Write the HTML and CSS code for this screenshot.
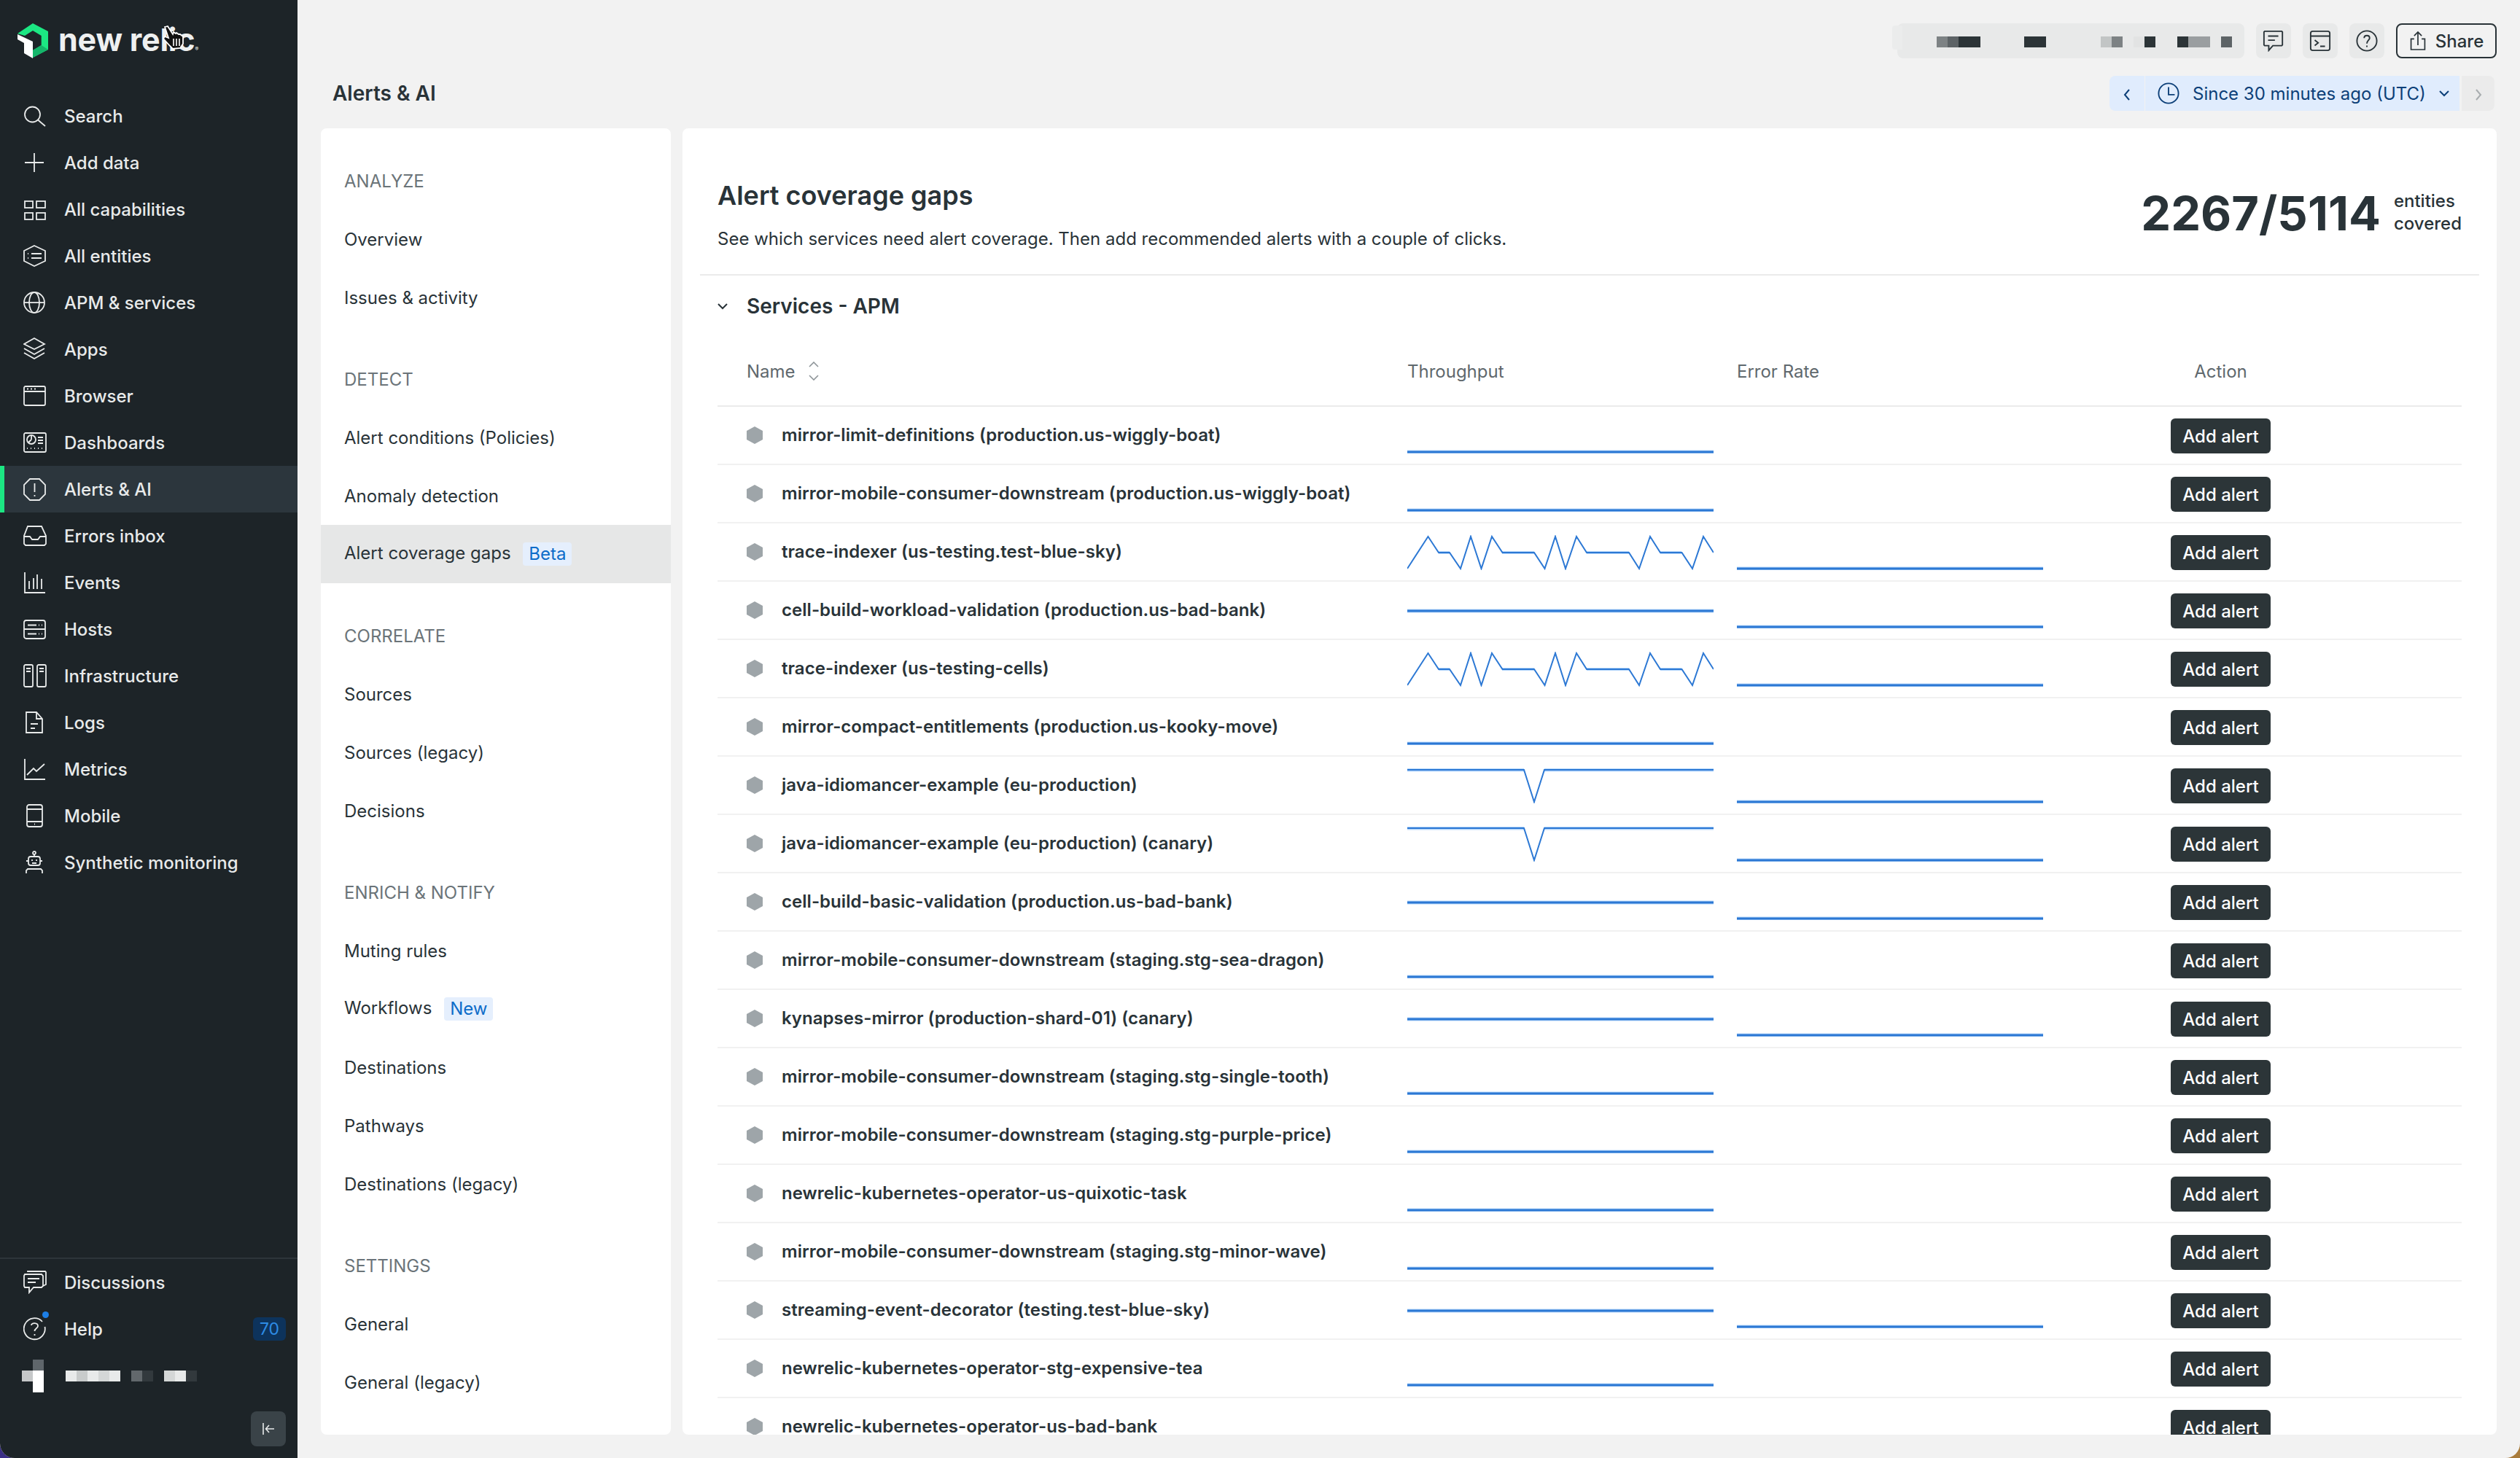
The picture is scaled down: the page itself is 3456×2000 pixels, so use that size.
FILE: index.html
```html
<!DOCTYPE html>
<html lang="en">
<head>
  <meta charset="UTF-8" />
  <title>Alert coverage gaps - New Relic</title>
  <link rel="stylesheet" href="styles.css">
</head>
<body>
  <!-- sparkline shapes, reused by every row -->
  <svg class="defs">
    <symbol id="sp-low" viewBox="0 0 420 48"><path class="halo" d="M0 46H420"/><path class="line" d="M0 46H420"/></symbol>
    <symbol id="sp-mid" viewBox="0 0 420 48"><path class="halo" d="M0 24H420"/><path class="line" d="M0 24H420"/></symbol>
    <symbol id="sp-zig" viewBox="0 0 420 48"><path class="halo thin" d="M43 24H58M130 24H174M246 24H304M347 24H376"/><path class="line thin" d="M0 46L28.5 2L43 24H58L73 46L87 2L101.500 46L116 2L130.500 24H174L188.500 46L203 2L217 46L232 2L246 24H304L318 46L333 2L347 24H376.500L391 46L406 2L420 24"/></symbol>
    <symbol id="sp-dip" viewBox="0 0 420 48"><path class="halo" d="M0 2H160M188 2H420"/><path class="line thin" d="M0 2H160L174 46L188 2H420"/></symbol>
  </svg>

  <div class="app">
    <aside class="sidebar">
      <div class="logo">
        <svg class="logo-mark" viewBox="0 0 42 48"><path fill="#1ce783" d="M21 0L42 11V36L21 47V37L32.700 30V17L21 10L10 17L0 14Z"/><path fill="#15b56a" d="M32.700 30L42 36L21 47V37Z"/><path fill="#fff" d="M0 15L21 25V48L9 41V27L0 22Z"/></svg>
        <span class="logo-text">new relic<sup>®</sup></span>
        <svg class="cursor" viewBox="0 0 30 33"><path fill="#111" stroke="#fff" stroke-width="1.800" d="M3 2L7 1L14 12L15 9L18 11L19 10L22 12L24 12L28 15L28 25L24 31L14 32L10 28L1 18L3 15L8 17Z"/><path stroke="#fff" stroke-width="1.600" d="M15 18V28M19 18V28M23 18V28"/></svg>
      </div>

      <nav class="side-nav">
        <a class="side-item"><svg viewBox="0 0 32 32"><circle cx="12.500" cy="14" r="10.500"/><path d="M20 21.500L30 30"/></svg>Search</a>
        <a class="side-item"><svg viewBox="0 0 32 32"><path d="M15 3V29M2 16H28"/></svg>Add data</a>
        <a class="side-item"><svg viewBox="0 0 32 32"><rect x="2" y="5" width="11" height="9"/><rect x="18" y="5" width="12" height="9"/><rect x="2" y="21" width="11" height="9"/><rect x="18" y="21" width="12" height="9"/></svg>All capabilities</a>
        <a class="side-item"><svg viewBox="0 0 32 32"><path d="M15 2L30 9V23L15 30L1 23V9Z"/><path d="M11 13H25M11 19H25M6 13H7M6 19H7"/></svg>All entities</a>
        <a class="side-item"><svg viewBox="0 0 32 32"><circle cx="15" cy="16" r="14"/><ellipse cx="15" cy="16" rx="7" ry="14"/><path d="M1 16H29"/></svg>APM &amp; services</a>
        <a class="side-item"><svg viewBox="0 0 32 32"><path d="M15 1L29 9L15 16L1 9Z"/><path d="M1 15L15 23L29 15"/><path d="M1 21L15 29L29 21"/></svg>Apps</a>
        <a class="side-item"><svg viewBox="0 0 32 32"><rect x="1" y="3" width="29" height="26" rx="2"/><path d="M1 10H30M5 6.500H7M10 6.500H12M15 6.500H17"/></svg>Browser</a>
        <a class="side-item"><svg viewBox="0 0 32 32"><rect x="1" y="3" width="30" height="26" rx="2"/><circle cx="11" cy="12" r="6"/><path d="M11 12V6M11 12L7 16M20 9H27M20 13H27M20 17H27M5 24H6M10 24H11M15 24H16M20 24H21M25 24H26"/></svg>Dashboards</a>
        <a class="side-item active"><svg viewBox="0 0 32 32"><path d="M9 2H22L30 10V23L22 31H9L1 23V10Z"/><path d="M15.500 8V20M15.500 24V26"/></svg>Alerts &amp; AI</a>
        <a class="side-item"><svg viewBox="0 0 32 32"><path d="M6 3H25L31 16V27L29 29H3L1 27V16Z"/><path d="M1 17H9L12 21H20L23 17H31"/></svg>Errors inbox</a>
        <a class="side-item"><svg viewBox="0 0 32 32"><path d="M2 2V30H30M8 14V25M14 10V25M19 5V25M25 11V25"/></svg>Events</a>
        <a class="side-item"><svg viewBox="0 0 32 32"><rect x="1" y="4" width="29" height="25" rx="3"/><path d="M1 16H30M6 10.500H18M21 10.500H22M25 10.500H26M6 22.500H18M21 22.500H22M25 22.500H26"/></svg>Hosts</a>
        <a class="side-item"><svg viewBox="0 0 32 32"><rect x="1" y="1" width="12" height="30" rx="2"/><rect x="19" y="1" width="12" height="30" rx="2"/><path d="M4 6H10M4 10H10M22 6H28M22 10H28"/></svg>Infrastructure</a>
        <a class="side-item"><svg viewBox="0 0 32 32"><path d="M4 2H18L26 11V30H4Z"/><path d="M18 2V11H26M10 18H20M10 24H16"/></svg>Logs</a>
        <a class="side-item"><svg viewBox="0 0 32 32"><path d="M2 2V30H30M5 24L14 15L18 19L29 9"/></svg>Metrics</a>
        <a class="side-item"><svg viewBox="0 0 32 32"><rect x="5" y="1" width="21" height="30" rx="3"/><path d="M5 7H26M5 24H26M15 27.500H16"/></svg>Mobile</a>
        <a class="side-item"><svg viewBox="0 0 32 32"><circle cx="15" cy="3" r="2"/><path d="M15 5V8"/><rect x="7" y="8" width="16" height="12" rx="3"/><path d="M4 14H7M23 14H26M12 12V14M18 12V14M12 17H18M4 31V27L6 25H24L26 27V31"/></svg>Synthetic monitoring</a>
      </nav>

      <div class="side-bottom">
        <a class="side-item"><svg viewBox="0 0 32 32"><path d="M6 2V1H30L31 2V19L27 21"/><path d="M2 5H25L27 7V21L25 23H14L8 30V23H2L1 21V7Z"/><path d="M6 11H22M6 16H17"/></svg>Discussions</a>
        <a class="side-item"><svg class="help-icon" viewBox="0 0 32 32"><path d="M26 6A14.500 14.500 0 1 0 29.500 13"/><path d="M11 11C11 7 20 7 20 12C20 15 15.500 15 15.500 19M15.500 23V25"/></svg><span class="side-grow">Help</span><b class="count">70</b><i class="help-dot"></i></a>
        <div class="user-row">
          <div class="avatar"><i class="px"></i><i class="px a1"></i><i class="px a2"></i><i class="px a3"></i><i class="px"></i><i class="px a3"></i></div>
          <div class="px-row">
            <i class="px u1"></i><i class="px u2"></i><i class="px u1"></i><i class="px u3"></i><i class="px u1"></i><i class="px"></i>
            <i class="px u4"></i><i class="px u5"></i><i class="px"></i>
            <i class="px u3"></i><i class="px u1"></i><i class="px u5"></i>
          </div>
        </div>
        <div class="collapse-row">
          <button class="collapse"><svg viewBox="0 0 20 20"><path d="M3 2V18M18 10H7M11 5L6.500 10L11 15"/></svg></button>
        </div>
      </div>
    </aside>

    <main class="content">
      <div class="topbar">
        <div class="pill">
          <i class="px t1"></i><i class="px t2"></i><i class="px t3"></i><i class="px t3"></i>
          <i class="px"></i><i class="px"></i><i class="px"></i><i class="px"></i>
          <i class="px t3"></i><i class="px t3"></i>
          <i class="px"></i><i class="px"></i><i class="px"></i><i class="px"></i><i class="px"></i>
          <i class="px t4"></i><i class="px t1"></i><i class="px"></i>
          <i class="px t5"></i><i class="px t3"></i><i class="px"></i><i class="px"></i>
          <i class="px t3"></i><i class="px t6"></i><i class="px t6"></i><i class="px"></i>
          <i class="px t2"></i>
        </div>
        <button class="icon-btn"><svg viewBox="0 0 32 32"><path d="M3 2H28L29 3V22L28 23H15L9 30V23H3L2 22V3Z"/><path d="M8 9H23M8 15H18"/></svg></button>
        <button class="icon-btn"><svg viewBox="0 0 32 32"><rect x="2" y="2" width="28" height="28" rx="3"/><path d="M2 9H30M8 15L13 19L8 23M16 24H23"/></svg></button>
        <button class="icon-btn"><svg viewBox="0 0 32 32"><circle cx="16" cy="16" r="14.500"/><path d="M12 12C12 7 20 7 20 12C20 15 16 15.500 16 20M16 23V25"/></svg></button>
        <button class="share"><svg viewBox="0 0 28 32"><path d="M8 13H3V30H25V13H20M14 23V2M8 8L14 2L20 8"/></svg>Share</button>
      </div>

      <div class="page-head">
        <h1 class="page-title">Alerts &amp; AI</h1>
        <div class="time-picker">
          <button class="time-prev"><svg viewBox="0 0 12 20"><path d="M9 3L3 10L9 17"/></svg></button>
          <button class="time-main">
            <svg class="clock" viewBox="0 0 32 32"><circle cx="16" cy="16" r="14.500"/><path d="M16 7V18H25"/></svg>
            Since 30 minutes ago (UTC)
            <svg class="chev" viewBox="0 0 14 10"><path d="M1 2L7 8L13 2"/></svg>
          </button>
          <button class="time-next"><svg viewBox="0 0 12 20"><path d="M3 3L9 10L3 17"/></svg></button>
        </div>
      </div>

      <div class="panels">
        <nav class="sub-nav">
          <section class="sub-group">
            <h3>ANALYZE</h3>
            <a>Overview</a>
            <a>Issues &amp; activity</a>
          </section>
          <section class="sub-group">
            <h3>DETECT</h3>
            <a>Alert conditions (Policies)</a>
            <a>Anomaly detection</a>
            <a class="current has-tag">Alert coverage gaps <span class="tag">Beta</span></a>
          </section>
          <section class="sub-group">
            <h3>CORRELATE</h3>
            <a>Sources</a>
            <a>Sources (legacy)</a>
            <a>Decisions</a>
          </section>
          <section class="sub-group">
            <h3>ENRICH &amp; NOTIFY</h3>
            <a>Muting rules</a>
            <a class="has-tag">Workflows <span class="tag">New</span></a>
            <a>Destinations</a>
            <a>Pathways</a>
            <a>Destinations (legacy)</a>
          </section>
          <section class="sub-group">
            <h3>SETTINGS</h3>
            <a>General</a>
            <a>General (legacy)</a>
          </section>
        </nav>

        <section class="card">
          <header class="card-head">
            <div>
              <h2>Alert coverage gaps</h2>
              <p>See which services need alert coverage. Then add recommended alerts with a couple of clicks.</p>
            </div>
            <div class="covered">
              <strong>2267/5114</strong>
              <span>entities<br>covered</span>
            </div>
          </header>

          <div class="card-body">
            <div class="group-title">
              <svg viewBox="0 0 14 10"><path d="M1 2L7 8L13 2"/></svg>
              Services - APM
            </div>

            <div class="row row-head">
              <div class="th-name">Name <svg viewBox="0 0 14 26"><path d="M1 7L7 1L13 7M1 19L7 25L13 19"/></svg></div>
              <div>Throughput</div>
              <div>Error Rate</div>
              <div class="th-action">Action</div>
            </div>

            <div class="row">
              <div class="name"><svg viewBox="0 0 22 24"><path d="M11 0L22 6V18L11 24L0 18V6Z"/></svg><span>mirror-limit-definitions (production.us-wiggly-boat)</span></div>
              <svg class="spark"><use href="#sp-low"/></svg>
              <div></div>
              <button class="add">Add alert</button>
            </div>
            <div class="row">
              <div class="name"><svg viewBox="0 0 22 24"><path d="M11 0L22 6V18L11 24L0 18V6Z"/></svg><span>mirror-mobile-consumer-downstream (production.us-wiggly-boat)</span></div>
              <svg class="spark"><use href="#sp-low"/></svg>
              <div></div>
              <button class="add">Add alert</button>
            </div>
            <div class="row">
              <div class="name"><svg viewBox="0 0 22 24"><path d="M11 0L22 6V18L11 24L0 18V6Z"/></svg><span>trace-indexer (us-testing.test-blue-sky)</span></div>
              <svg class="spark"><use href="#sp-zig"/></svg>
              <svg class="spark"><use href="#sp-low"/></svg>
              <button class="add">Add alert</button>
            </div>
            <div class="row">
              <div class="name"><svg viewBox="0 0 22 24"><path d="M11 0L22 6V18L11 24L0 18V6Z"/></svg><span>cell-build-workload-validation (production.us-bad-bank)</span></div>
              <svg class="spark"><use href="#sp-mid"/></svg>
              <svg class="spark"><use href="#sp-low"/></svg>
              <button class="add">Add alert</button>
            </div>
            <div class="row">
              <div class="name"><svg viewBox="0 0 22 24"><path d="M11 0L22 6V18L11 24L0 18V6Z"/></svg><span>trace-indexer (us-testing-cells)</span></div>
              <svg class="spark"><use href="#sp-zig"/></svg>
              <svg class="spark"><use href="#sp-low"/></svg>
              <button class="add">Add alert</button>
            </div>
            <div class="row">
              <div class="name"><svg viewBox="0 0 22 24"><path d="M11 0L22 6V18L11 24L0 18V6Z"/></svg><span>mirror-compact-entitlements (production.us-kooky-move)</span></div>
              <svg class="spark"><use href="#sp-low"/></svg>
              <div></div>
              <button class="add">Add alert</button>
            </div>
            <div class="row">
              <div class="name"><svg viewBox="0 0 22 24"><path d="M11 0L22 6V18L11 24L0 18V6Z"/></svg><span>java-idiomancer-example (eu-production)</span></div>
              <svg class="spark"><use href="#sp-dip"/></svg>
              <svg class="spark"><use href="#sp-low"/></svg>
              <button class="add">Add alert</button>
            </div>
            <div class="row">
              <div class="name"><svg viewBox="0 0 22 24"><path d="M11 0L22 6V18L11 24L0 18V6Z"/></svg><span>java-idiomancer-example (eu-production) (canary)</span></div>
              <svg class="spark"><use href="#sp-dip"/></svg>
              <svg class="spark"><use href="#sp-low"/></svg>
              <button class="add">Add alert</button>
            </div>
            <div class="row">
              <div class="name"><svg viewBox="0 0 22 24"><path d="M11 0L22 6V18L11 24L0 18V6Z"/></svg><span>cell-build-basic-validation (production.us-bad-bank)</span></div>
              <svg class="spark"><use href="#sp-mid"/></svg>
              <svg class="spark"><use href="#sp-low"/></svg>
              <button class="add">Add alert</button>
            </div>
            <div class="row">
              <div class="name"><svg viewBox="0 0 22 24"><path d="M11 0L22 6V18L11 24L0 18V6Z"/></svg><span>mirror-mobile-consumer-downstream (staging.stg-sea-dragon)</span></div>
              <svg class="spark"><use href="#sp-low"/></svg>
              <div></div>
              <button class="add">Add alert</button>
            </div>
            <div class="row">
              <div class="name"><svg viewBox="0 0 22 24"><path d="M11 0L22 6V18L11 24L0 18V6Z"/></svg><span>kynapses-mirror (production-shard-01) (canary)</span></div>
              <svg class="spark"><use href="#sp-mid"/></svg>
              <svg class="spark"><use href="#sp-low"/></svg>
              <button class="add">Add alert</button>
            </div>
            <div class="row">
              <div class="name"><svg viewBox="0 0 22 24"><path d="M11 0L22 6V18L11 24L0 18V6Z"/></svg><span>mirror-mobile-consumer-downstream (staging.stg-single-tooth)</span></div>
              <svg class="spark"><use href="#sp-low"/></svg>
              <div></div>
              <button class="add">Add alert</button>
            </div>
            <div class="row">
              <div class="name"><svg viewBox="0 0 22 24"><path d="M11 0L22 6V18L11 24L0 18V6Z"/></svg><span>mirror-mobile-consumer-downstream (staging.stg-purple-price)</span></div>
              <svg class="spark"><use href="#sp-low"/></svg>
              <div></div>
              <button class="add">Add alert</button>
            </div>
            <div class="row">
              <div class="name"><svg viewBox="0 0 22 24"><path d="M11 0L22 6V18L11 24L0 18V6Z"/></svg><span>newrelic-kubernetes-operator-us-quixotic-task</span></div>
              <svg class="spark"><use href="#sp-low"/></svg>
              <div></div>
              <button class="add">Add alert</button>
            </div>
            <div class="row">
              <div class="name"><svg viewBox="0 0 22 24"><path d="M11 0L22 6V18L11 24L0 18V6Z"/></svg><span>mirror-mobile-consumer-downstream (staging.stg-minor-wave)</span></div>
              <svg class="spark"><use href="#sp-low"/></svg>
              <div></div>
              <button class="add">Add alert</button>
            </div>
            <div class="row">
              <div class="name"><svg viewBox="0 0 22 24"><path d="M11 0L22 6V18L11 24L0 18V6Z"/></svg><span>streaming-event-decorator (testing.test-blue-sky)</span></div>
              <svg class="spark"><use href="#sp-mid"/></svg>
              <svg class="spark"><use href="#sp-low"/></svg>
              <button class="add">Add alert</button>
            </div>
            <div class="row">
              <div class="name"><svg viewBox="0 0 22 24"><path d="M11 0L22 6V18L11 24L0 18V6Z"/></svg><span>newrelic-kubernetes-operator-stg-expensive-tea</span></div>
              <svg class="spark"><use href="#sp-low"/></svg>
              <div></div>
              <button class="add">Add alert</button>
            </div>
            <div class="row">
              <div class="name"><svg viewBox="0 0 22 24"><path d="M11 0L22 6V18L11 24L0 18V6Z"/></svg><span>newrelic-kubernetes-operator-us-bad-bank</span></div>
              <div></div>
              <div></div>
              <button class="add">Add alert</button>
            </div>
          </div>
        </section>
      </div>
    </main>
  </div>
</body>
</html>
```

FILE: styles.css
```css
* {
  box-sizing: border-box;
}

html, body {
  height: 100%;
}

body {
  margin: 0;
  font-family: 'Inter', 'Liberation Sans', sans-serif;
  font-size: 24px;
  color: #293338;
  background: linear-gradient(90deg, #3b2f86 50%, #a97c3c 50%);
}

h1, h2, h3, p {
  margin: 0;
}

button {
  font: inherit;
  border: none;
  padding: 0;
  cursor: pointer;
}

.defs {
  display: none;
}

.halo {
  fill: none;
  stroke: #b4d6fb;
  stroke-width: 5;
}

.halo.thin {
  stroke-width: 4;
}

.line {
  fill: none;
  stroke: #2c78d4;
  stroke-width: 3;
}

.line.thin {
  stroke-width: 2;
}

.app {
  display: flex;
  height: 2000px;
  background: #f2f2f2;
  border-radius: 0 0 20px 20px;
  overflow: hidden;
}

/* pixelated (blurred out) blocks */
.px {
  display: block;
  width: 15px;
  height: 15px;
}

/* left bar */
.sidebar {
  width: 408px;
  flex-shrink: 0;
  display: flex;
  flex-direction: column;
  background: #1d2428;
  color: #e8eaea;
}

.logo {
  position: relative;
  height: 127px;
  padding: 32px 0 0 24px;
  display: flex;
  align-items: flex-start;
  gap: 14px;
}

.logo-mark {
  width: 42px;
  height: 48px;
  flex-shrink: 0;
}

.logo-text {
  font-size: 43px;
  line-height: 44px;
  font-weight: 700;
  color: #eef0f0;
  letter-spacing: -0.2px;
}

.logo-text sup {
  font-size: 7px;
  font-weight: 400;
  line-height: 0;
  vertical-align: baseline;
}

.cursor {
  position: absolute;
  left: 223px;
  top: 35px;
  width: 30px;
  height: 33px;
}

.side-item {
  height: 64px;
  display: flex;
  align-items: center;
  gap: 24px;
  padding-left: 32px;
  font-weight: 500;
  white-space: nowrap;
}

.side-item svg {
  width: 32px;
  height: 32px;
  flex-shrink: 0;
  fill: none;
  stroke: #e8eaea;
  stroke-width: 1.8;
}

.side-item.active {
  background: #2c363d;
  box-shadow: inset 6px 0 0 #1ce783;
}

.side-bottom {
  margin-top: auto;
  border-top: 2px solid #2d353a;
}

.side-bottom .side-item {
  position: relative;
}

.side-grow {
  flex: 1;
}

.count {
  margin-right: 16px;
  width: 45px;
  height: 32px;
  border-radius: 6px;
  background: #0d335c;
  color: #2e8ce6;
  font-weight: 400;
  font-size: 23px;
  line-height: 32px;
  text-align: center;
}

.help-dot {
  position: absolute;
  left: 58px;
  top: 8px;
  width: 9px;
  height: 9px;
  border-radius: 50%;
  background: #1d7fe6;
}

.user-row {
  display: flex;
  align-items: center;
  gap: 30px;
  height: 64px;
  padding: 0 0 0 30px;
}

.avatar {
  display: grid;
  grid-template-columns: 15px 15px;
}

.a1 { background: #5f666b; }
.a2 { background: #c6c8c9; }
.a3 { background: #fff; }

.px-row {
  display: flex;
}

.u1 { background: #e8eaea; }
.u2 { background: #c8cbcb; }
.u3 { background: #d4d7d7; }
.u4 { background: #62686c; }
.u5 { background: #32393d; }

.collapse-row {
  display: flex;
  justify-content: flex-end;
  padding: 17px 16px 16px 0;
}

.collapse {
  width: 48px;
  height: 48px;
  border-radius: 8px;
  background: #3a4348;
  display: flex;
  align-items: center;
  justify-content: center;
}

.collapse svg {
  width: 20px;
  height: 20px;
  fill: none;
  stroke: #e8eaea;
  stroke-width: 1.6;
}

/* everything right of the bar */
.content {
  flex: 1;
  min-width: 0;
  display: flex;
  flex-direction: column;
  gap: 24px;
  padding: 32px;
}

.topbar {
  height: 48px;
  display: flex;
  justify-content: flex-end;
  gap: 16px;
}

.pill {
  position: relative;
  width: 476px;
  height: 48px;
  padding: 18px 0 0 54px;
  display: flex;
  background: #e8e9e9;
  border-radius: 8px;
}

.pill::before {
  content: '';
  position: absolute;
  left: -7px;
  top: 3px;
  width: 14px;
  height: 33px;
  background: #ebecec;
  border-radius: 4px 0 0 4px;
}

.t1 { background: #7d8284; }
.t2 { background: #5d6366; }
.t3 { background: #2c3437; }
.t4 { background: #c2c5c5; }
.t5 { background: #e2e3e3; }
.t6 { background: #9a9ea0; }

.icon-btn {
  width: 48px;
  height: 48px;
  border-radius: 8px;
  background: #e8e9e9;
  display: flex;
  align-items: center;
  justify-content: center;
}

.icon-btn svg {
  width: 30px;
  height: 30px;
  fill: none;
  stroke: #293338;
  stroke-width: 2;
}

.share {
  width: 138px;
  height: 48px;
  border: 2px solid #293338;
  border-radius: 8px;
  background: transparent;
  color: #293338;
  font-weight: 500;
  display: flex;
  align-items: center;
  justify-content: center;
  gap: 12px;
}

.share svg {
  width: 24px;
  height: 30px;
  fill: none;
  stroke: #293338;
  stroke-width: 2;
}

.page-head {
  height: 48px;
  display: flex;
  align-items: center;
  justify-content: space-between;
  padding-left: 16px;
}

.page-title {
  font-size: 28px;
  font-weight: 600;
}

.time-picker {
  display: flex;
  height: 48px;
  margin-right: 3px;
  color: #0c3f78;
}

.time-prev, .time-main {
  background: #e0ecfd;
  color: inherit;
}

.time-prev {
  width: 48px;
  margin-right: 1px;
  border-radius: 8px 0 0 8px;
}

.time-main {
  width: 431px;
  display: flex;
  align-items: center;
  padding-left: 17px;
  gap: 18px;
}

.time-next {
  width: 45px;
  margin-left: 3px;
  border-radius: 0 8px 8px 0;
  background: #ebebeb;
}

.time-prev svg, .time-next svg {
  width: 12px;
  height: 20px;
  fill: none;
  stroke: #0c3f78;
  stroke-width: 2;
  vertical-align: middle;
}

.time-next svg {
  stroke: #a9adaf;
}

.clock {
  width: 30px;
  height: 30px;
  fill: none;
  stroke: #0c3f78;
  stroke-width: 2;
}

.chev {
  width: 14px;
  height: 10px;
  fill: none;
  stroke: #0c3f78;
  stroke-width: 2;
}

.panels {
  flex: 1;
  min-height: 0;
  display: flex;
  gap: 16px;
}

/* secondary nav */
.sub-nav {
  width: 480px;
  flex-shrink: 0;
  padding-top: 32px;
  background: #fff;
  border-radius: 8px;
  overflow: hidden;
}

.sub-group {
  margin-bottom: 32px;
}

.sub-group h3 {
  height: 80px;
  line-height: 82px;
  padding-left: 32px;
  font-size: 24px;
  font-weight: 400;
  color: #6b7479;
}

.sub-group a {
  height: 80px;
  display: flex;
  align-items: center;
  padding-left: 32px;
  white-space: pre;
}

.sub-group a.has-tag {
  padding-bottom: 3px;
}

.sub-group a.current {
  background: #e6e7e7;
}

.tag {
  margin: 3px 0 0 10px;
  padding: 0 8px;
  height: 32px;
  line-height: 32px;
  border-radius: 4px;
  background: #e5effd;
  color: #0d6cc9;
}

/* main card */
.card {
  flex: 1;
  min-width: 0;
  background: #fff;
  border-radius: 8px;
  overflow: hidden;
}

.card-head {
  margin: 0 24px;
  padding: 70px 24px 34px;
  height: 202px;
  border-bottom: 2px solid #ebebeb;
  display: flex;
  justify-content: space-between;
}

.card-head h2 {
  font-size: 36px;
  line-height: 44px;
  font-weight: 600;
}

.card-head p {
  margin-top: 22px;
  line-height: 32px;
}

.covered {
  display: flex;
  align-items: center;
  gap: 18px;
  margin-top: -2px;
}

.covered strong {
  font-size: 65px;
  line-height: 72px;
  font-weight: 700;
}

.covered span {
  margin-bottom: 4px;
  font-weight: 500;
  line-height: 31px;
}

.card-body {
  padding: 0 48px;
}

.group-title {
  height: 84px;
  display: flex;
  align-items: center;
  gap: 26px;
  font-size: 28px;
  font-weight: 600;
}

.group-title svg {
  width: 14px;
  height: 10px;
  fill: none;
  stroke: #293338;
  stroke-width: 2;
}

.row {
  height: 80px;
  padding-left: 40px;
  display: grid;
  grid-template-columns: 906px 452px 595px 137px;
  align-items: center;
  border-bottom: 2px solid #f1f1f1;
}

.row-head {
  height: 96px;
  color: #5f686d;
  border-bottom-color: #ebebeb;
}

.th-name {
  display: flex;
  align-items: center;
  gap: 18px;
}

.th-name svg {
  width: 14px;
  height: 26px;
  fill: none;
  stroke: #8d9498;
  stroke-width: 1.6;
}

.th-action {
  text-align: center;
}

.name {
  display: flex;
  align-items: center;
  gap: 26px;
  font-weight: 600;
  letter-spacing: 0.04px;
  white-space: nowrap;
}

.name svg {
  width: 22px;
  height: 24px;
  fill: #9ea5a9;
  flex-shrink: 0;
}

.name span {
  margin-top: -1px;
}

.spark {
  display: block;
  align-self: start;
  width: 420px;
  height: 48px;
  margin-top: 16px;
}

.add {
  width: 137px;
  height: 48px;
  margin-top: 2px;
  border-radius: 6px;
  background: #2c3538;
  color: #fff;
  font-weight: 500;
}
```
